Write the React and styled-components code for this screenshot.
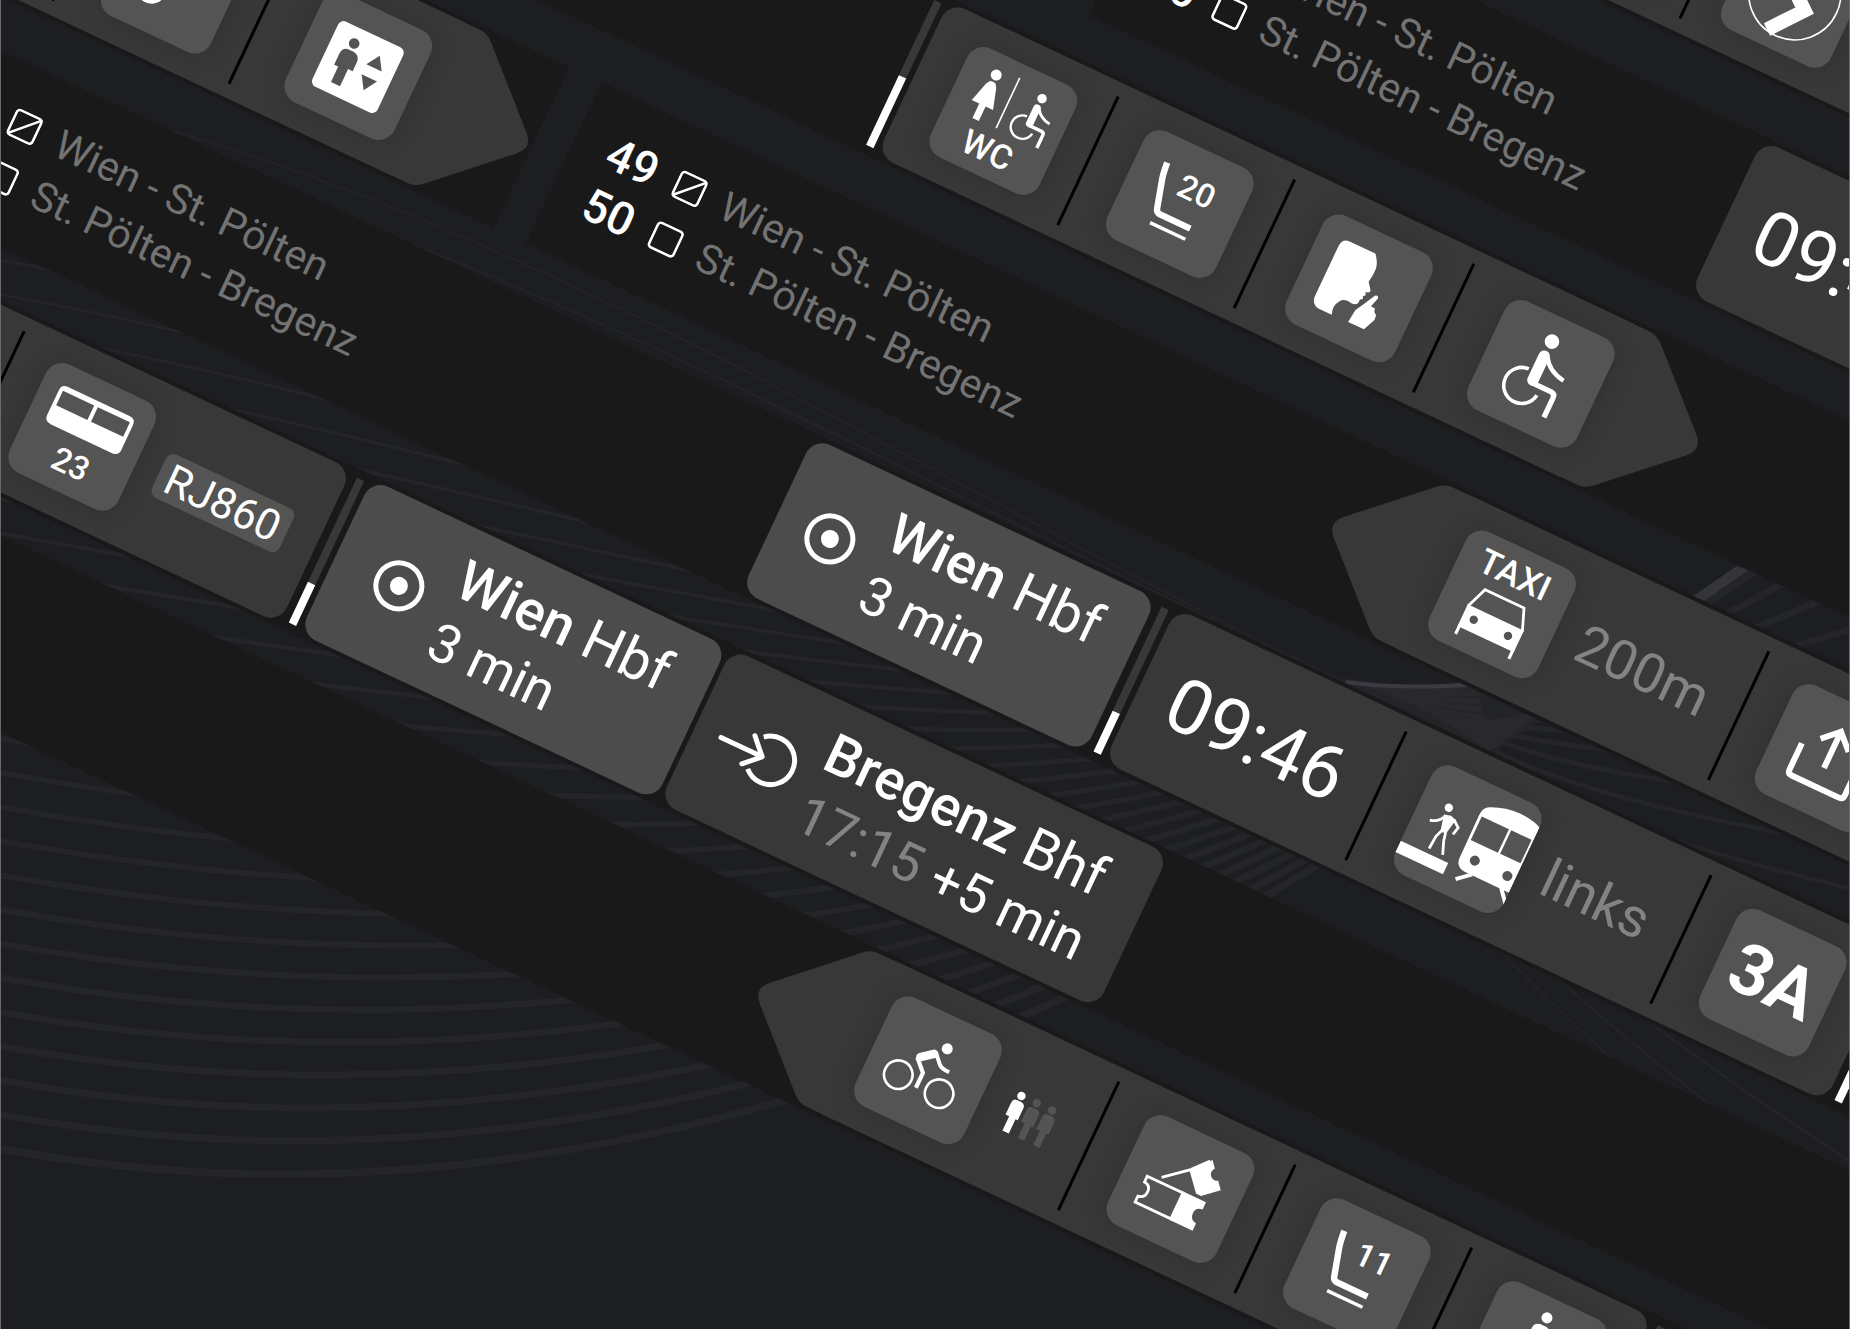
import React from 'react'
import styled, { createGlobalStyle } from 'styled-components'

const GlobalStyle = createGlobalStyle`
    * {
        box-sizing: border-box;
    }

    body {
        margin: 0;
        background: #1d1e22;
        color: #fff;
        font-family: Roboto, "Liberation Sans", sans-serif;
    }
`

const Page = styled.main`
    position: relative;
    height: 100vh;
    overflow: hidden;
    border-left: 1px solid #6a6a6a;
    border-right: 1px solid #6a6a6a;
`

const Backdrop = styled.svg`
    position: absolute;
    top: 0;
    left: 0;
    width: 1850px;
    height: 1330px;
    fill: none;
`

const Board = styled.div`
    position: relative;
    display: flex;
    flex-direction: column;
    width: 150vw;
    transform: translate(184px, -862px) rotate(25.2deg);
    transform-origin: 0 0;
`

const Track = styled.div`
    display: flex;
    gap: 36px;
    margin-top: ${({ $gap }) => $gap || 0}px;
    padding-left: ${({ $start }) => $start || 0}px;
`

const Train = styled.section`
    display: flex;
    flex: ${({ $fill }) => ($fill ? '1 0 auto' : 'none')};
    height: 178px;
    padding: 4px 4px 4px ${({ $lead }) => $lead || 4}px;
    background: #191919;
`

const Card = styled.div`
    position: relative;
    z-index: 1;
    display: flex;
    flex: none;
    align-items: center;
    height: 170px;
    margin-right: ${({ $apart }) => ($apart ? 5 : 0)}px;
    padding: 0 ${({ $end }) => $end || 0}px 0 ${({ $pad }) => $pad || 0}px;
    border-radius: ${({ $tip }) => (
        $tip === 'left' ? '0 18px 18px 0' : $tip === 'right' ? '18px 0 0 18px' : '18px'
    )};
    background: ${({ $current }) => ($current ? '#4c4c4c' : '#383838')};
`

const Tip = styled.span`
    flex: none;
    width: 112px;
    height: 170px;
    margin: ${({ $left }) => ($left ? '0 -2px 0 0' : '0 0 0 -2px')};
    background: #383838;
    clip-path: path('M0 0 H18 Q28 0 35 7 L105 73 Q118 85 105 97 L35 163 Q28 170 18 170 H0 Z');
    transform: ${({ $left }) => ($left ? 'scaleX(-1)' : 'none')};
`

const Cell = styled.div`
    display: flex;
    align-items: center;
    gap: 25px;
    height: 142px;
    padding: 0 ${({ $end }) => $end || 32}px 0 ${({ $pad }) => $pad || 40}px;
    border-right: ${({ $last }) => ($last ? 'none' : '3px solid #000')};
`

const Tile = styled.svg`
    flex: none;
    width: 120px;
    height: 120px;
    border-radius: 18px;
    background: #545454;
    box-shadow: 0 0 24px rgba(0, 0, 0, 0.16);
    fill: #fff;
    font-weight: 500;
    text-anchor: middle;
`

const Meter = styled.span`
    flex: none;
    display: flex;
    align-items: flex-end;
    width: 8px;
    height: 160px;
    margin: 5px 6px 5px 8px;
    background: #383838;
`

const MeterFill = styled.span`
    width: 8px;
    height: ${({ $level }) => $level}%;
    background: #fff;
`

const Time = styled.time`
    font-size: 76px;
    line-height: 84px;
`

const Note = styled.span`
    color: #838383;
    font-size: 55px;
    line-height: 64px;
`

const Chip = styled.span`
    padding: 0 9px;
    border-radius: 8px;
    background: #545454;
    font-size: 43px;
    line-height: 48px;
`

const StopText = styled.div`
    margin-left: ${({ $gap }) => $gap || 26}px;
    white-space: nowrap;
`

const StopName = styled.h2`
    margin: 0;
    font-size: 56px;
    font-weight: 400;
    line-height: 68px;

    b {
        font-weight: 500;
    }
`

const StopTime = styled.p`
    margin: 0;
    font-size: 54px;
    line-height: 68px;

    time {
        color: #838383;
    }
`

const Reservations = styled.ul`
    flex: none;
    width: ${({ $width }) => $width}px;
    margin: 0;
    padding: 27px 32px;
    list-style: none;
`

const Reservation = styled.li`
    display: flex;
    align-items: center;
    gap: 21px;
    height: 56px;
    color: #737373;
    font-size: 41px;
    line-height: 52px;
    white-space: nowrap;

    b {
        width: 53px;
        color: #fff;
        font-size: 46px;
        font-weight: 500;
    }
`

const LineIcon = styled.svg`
    flex: none;
    fill: none;
    stroke: #fff;
    stroke-linecap: round;
    stroke-linejoin: round;
`

const Wheelchair = () => (
    <g fill="none" stroke="#fff">
        <circle cx="56.3" cy="26" r="7.3" fill="#fff" stroke="none" />
        <path d="M55.5 42.5V69" strokeWidth="11.5" strokeLinecap="round" />
        <path d="M56 71.8H77Q81.5 72 81.3 77V98" strokeWidth="5.4" />
        <path d="M59 42Q66 54 83.5 56.5" strokeWidth="4.4" />
        <path d="M47 60.6A18 18 0 1 0 65.5 81" strokeWidth="3.6" />
    </g>
)

const Seat = ({ number }) => (
    <>
        <path d="M31 28Q32 40 34 47L41.500 74Q42.500 77.500 46 77.800H80" fill="none" stroke="#fff" strokeWidth="6.400" />
        <path d="M41 89.500H80" stroke="#fff" strokeWidth="3.500" />
        <text x="70" y="53" fontSize="33">{number}</text>
    </>
)

const icons = {
    cup: <path d="M28 34H58V78A15 15 0 0 1 28 78Z" />,
    lift: (
        <>
            <rect x="24" y="25" width="72" height="72" rx="6" />
            <g fill="#545454">
                <ellipse cx="46.600" cy="41.300" rx="5.300" ry="5.300" />
                <path d="M43 49H50Q57 50 57 57V67H52V86H42V69H37.500V57Q37.500 50 43 49Z" />
                <path d="M75 41.500L83.500 55H66.500ZM66.500 66H83.500L75 79.500Z" />
            </g>
        </>
    ),
    coach: (
        <>
            <path fillRule="evenodd" d="M26 21H94Q101 21 101 28V55Q101 62 94 62H26Q19 62 19 55V28Q19 21 26 21ZM23 26.500V42.500H57.500V26.500ZM61.500 26.500V42.500H97V26.500Z" />
            <text x="61" y="101" fontSize="33">23</text>
        </>
    ),
    toilet: (
        <>
            <circle cx="34" cy="21.500" r="5.500" />
            <path d="M31 29.500Q34 28 37 29.500L39.500 33L46 54.500H37.800V70.500H30.800V54.500H22.500L28.500 33Z" />
            <path d="M56.500 14V69.500" stroke="#fff" strokeWidth="1.600" />
            <g transform="translate(48.900 6.400) scale(.65)"><Wheelchair /></g>
            <text x="58" y="105" fontSize="34">WC</text>
        </>
    ),
    seat20: <Seat number="20" />,
    seat11: <Seat number="11" />,
    quiet: (
        <>
            <path d="M31 21.500H60Q66 28 67 35Q67.500 42 66 50L71.500 57Q72 60 67.500 60.500L69 63.500L67 65.500L68 68L65.500 70Q67 76 60 76.800Q51 75 48 80Q43 87 46.600 95.500H33Q24 95 23.500 86V30Q24 22 31 21.500Z" />
            <path d="M77.500 60Q80.500 57.500 81.500 61L78.500 71L83 71.500L84 75L87 77L87.500 82L82 95H64.500L66 81L71 72.500Z" />
        </>
    ),
    wheelchair: <Wheelchair />,
    taxi: (
        <>
            <text x="59" y="40" fontSize="35">TAXI</text>
            <path d="M30 76L38.500 54H81.500L90 76" fill="none" stroke="#fff" strokeWidth="2.800" />
            <path fillRule="evenodd" d="M29 74.500H91V98.500H29ZM45.200 86A4.200 4.200 0 1 0 36.800 86A4.200 4.200 0 1 0 45.200 86ZM83 86A4.200 4.200 0 1 0 74.600 86A4.200 4.200 0 1 0 83 86Z" />
            <path d="M30.600 96V106.500M89.400 96V106.500" stroke="#fff" strokeWidth="3.200" />
        </>
    ),
    exit: (
        <g fill="none" stroke="#fff" strokeWidth="6">
            <path d="M29.500 58V87Q29.500 91.500 34 91.500H86Q90.500 91.500 90.500 87V58" />
            <path d="M60 71V31M44.500 46L60 31L75.500 46" />
        </g>
    ),
    platform: (
        <>
            <circle cx="29.500" cy="39.700" r="4.200" />
            <path d="M28 48L35 46L41 48L38 64L32 65Z" />
            <g fill="none" stroke="#fff" strokeWidth="2.800">
                <path d="M30 48Q27 57 17.500 59M39 48L46.500 54L44.500 62" />
                <path d="M33 63L30 71L29 85M37 63L39 72L44 85" />
            </g>
            <path d="M0 90H52.500V102.500H0Z" />
            <path fillRule="evenodd" d="M60 33Q60 25 66 22Q80 15 97 14.500Q112 15 120 19V91H71Q60.500 90 60.500 80ZM63 33.500V59.500H93V33.500ZM95.500 33.500V59.500H118V33.500ZM80.500 76.500A5 5 0 1 0 70.500 76.500A5 5 0 1 0 80.500 76.500ZM116.500 76.500A5 5 0 1 0 106.500 76.500A5 5 0 1 0 116.500 76.500Z" />
            <path d="M79 90L66 101.500M111 90L122 103" stroke="#fff" strokeWidth="4" />
        </>
    ),
    sector: <text x="60" y="83" fontSize="71" fontWeight="700">3A</text>,
    bike: (
        <g fill="none" stroke="#fff">
            <circle cx="35" cy="76.700" r="14.300" strokeWidth="2.600" />
            <circle cx="80" cy="76.500" r="14.300" strokeWidth="2.600" />
            <circle cx="68.300" cy="32.400" r="5.500" fill="#fff" stroke="none" />
            <path d="M47.500 51.500L58.500 42.500" strokeWidth="8.500" strokeLinecap="round" />
            <path d="M45 53L56.500 64.500V81" strokeWidth="4.200" />
            <path d="M60 41L68.500 50Q72 53 80 52.800" strokeWidth="4" />
        </g>
    ),
    tickets: (
        <>
            <path d="M24.500 62.500H64V91H24.500V84.500Q31.500 83.500 31.500 76.500Q31.500 69.500 24.500 69Z" fill="none" stroke="#fff" strokeWidth="2.800" />
            <path d="M63.500 61H88.700V69Q81.500 70 81.500 76.500Q81.500 83.500 88.700 84.500V92.500H63.500Z" />
            <path d="M60 39L76.700 20L82.400 26.800Q79 32 82.500 35.500Q86 39 90.700 36.500L97 44L81.500 57.500H76Z" />
            <path d="M38 57.500L61 38L75 22" fill="none" stroke="#fff" strokeWidth="2.800" />
        </>
    ),
    person: (
        <>
            <circle cx="56.500" cy="20.500" r="5.500" />
            <path d="M53 29H60Q66 30 66 36V58H61V98H51V58H47V36Q47 30 53 29Z" />
        </>
    ),
    direction: (
        <g fill="none" stroke="#fff">
            <circle cx="60" cy="60" r="46" strokeWidth="1.600" />
            <path d="M40 42L76 71L50 104" strokeWidth="14" />
        </g>
    ),
}

const labels = {
    cup: 'Bordcafé',
    lift: 'Lift',
    coach: 'Wagen 23',
    toilet: 'WC',
    seat20: '20 Plätze',
    seat11: '11 Plätze',
    quiet: 'Ruhezone',
    wheelchair: 'Rollstuhlplatz',
    taxi: 'Taxi',
    exit: 'Ausgang',
    platform: 'Ausstieg',
    sector: 'Bahnsteig 3A',
    bike: 'Fahrräder',
    tickets: 'Tickets',
    person: 'Person',
    direction: 'Richtung',
}

const Pictogram = ({ name }) => (
    <Tile viewBox="0 0 120 120" role="img" aria-label={labels[name]}>{icons[name]}</Tile>
)

const HereIcon = () => (
    <LineIcon width="52" height="52" viewBox="0 0 52 52" strokeWidth="5">
        <circle cx="26" cy="26" r="23" />
        <circle cx="26" cy="26" r="9" fill="#fff" stroke="none" />
    </LineIcon>
)

const ArrivalIcon = () => (
    <LineIcon width="86" height="56" viewBox="0 0 86 56" strokeWidth="5">
        <path d="M4 28H49M34 12L49.500 28L34 43" />
        <path d="M42.500 9.500A24.200 24.200 0 1 1 41.500 45" strokeLinecap="butt" />
    </LineIcon>
)

const Occupancy = () => (
    <svg width="54" height="46" viewBox="-2 -2 54 46" role="img" aria-label="Geringe Auslastung">
        {['#fff', '#545454', '#545454'].map((color, index) => (
            <g key={index} fill={color} transform={`translate(${index * 17} 0)`}>
                <circle cx="8.500" cy="4.500" r="4.200" />
                <path d="M6 10H11Q15.500 10.500 15.500 15V28H13V44H6V28H2V15Q2 10.500 6 10Z" />
            </g>
        ))}
    </svg>
)

const SeatBox = ({ half }) => (
    <LineIcon width="30" height="30" viewBox="0 0 30 30" strokeWidth="2.6">
        <rect x="1.500" y="1.500" width="27" height="27" rx="3.500" />
        {half && <path d="M2.500 27.500L27.500 2.500" />}
    </LineIcon>
)

function Seats({ width }) {
    return (
        <Reservations $width={width}>
            <Reservation><b>49</b><SeatBox half />Wien - St. Pölten</Reservation>
            <Reservation><b>50</b><SeatBox />St. Pölten - Bregenz</Reservation>
        </Reservations>
    )
}

function Progress({ level }) {
    return (
        <Meter>
            <MeterFill $level={level} />
        </Meter>
    )
}

function CurrentStop({ pad, end, apart }) {
    return (
        <Card $current $pad={pad} $end={end} $apart={apart}>
            <HereIcon />
            <StopText>
                <StopName><b>Wien</b> Hbf</StopName>
                <StopTime>3 min</StopTime>
            </StopText>
        </Card>
    )
}

// blends the outer swirl line into the inner one
const mix = (from, to, t) => from.map((value, index) => value + (to[index] - value) * t)

const swirls = [
    { count: 32, from: [-300, 1060, 350, 1330, 1050, 1080, 1510, 735], to: [-300, 60, 300, 60, 800, 420, 1345, 683] },
    { count: 18, from: [1510, 735, 1580, 690, 1650, 640, 1950, 440], to: [1345, 683, 1360, 820, 1500, 1000, 1950, 1330] },
    { count: 9, from: [1345, 682, 1400, 692, 1440, 688, 1476, 684], to: [1345, 682, 1400, 715, 1450, 735, 1490, 752] },
]

function Swirl() {
    return (
        <Backdrop viewBox="0 0 1850 1330" aria-hidden="true">
            {swirls.map(({ count, from, to }) => Array.from({ length: count }, (_, index) => {
                const t = index / (count - 1)
                const [x, y, ...rest] = mix(from, to, t)
                return <path key={`${count}-${index}`} d={`M${x} ${y}C${rest.join(' ')}`} stroke="#242529" strokeWidth={7.5 - 6 * t} />
            }))}
            <path d="M1345 681Q1400 690 1470 683L1535 716L1488 752Q1420 700 1345 681Z" fill="#3a3b42" fillOpacity=".2" />
            <path d="M1345 682Q1400 690 1476 684" stroke="#3a3b42" strokeWidth="4" />
            <path d="M1692 596L1736 566L1748 570L1702 602Z" fill="#34353b" />
        </Backdrop>
    )
}

function App() {
    return (
        <Page>
            <GlobalStyle />
            <Swirl />
            <Board>
                <Track>
                    <Train $lead={1534} $fill>
                        <Card>
                            <Cell><Pictogram name="tickets" /></Cell>
                            <Cell $pad={32} $end={60} $last><Pictogram name="direction" /></Cell>
                        </Card>
                    </Train>
                </Track>

                <Track $gap={53} $start={1192}>
                    <Train $fill>
                        <Seats width={658} />
                        <Card>
                            <Cell $pad={34} $end={36}><Time>09:46</Time></Cell>
                            <Cell $last><Pictogram name="platform" /></Cell>
                        </Card>
                    </Train>
                </Track>

                <Track $gap={43}>
                    <Train $lead={1037} $fill>
                        <Progress level={48} />
                        <Card $tip="right">
                            <Cell><Pictogram name="toilet" /></Cell>
                            <Cell><Pictogram name="seat20" /></Cell>
                            <Cell $pad={43}><Pictogram name="quiet" /></Cell>
                            <Cell $pad={46} $end={3} $last><Pictogram name="wheelchair" /></Cell>
                        </Card>
                        <Tip />
                    </Train>
                </Track>

                <Track $gap={47}>
                    <Train $lead={54}>
                        <Card $tip="right">
                            <Cell><Pictogram name="tickets" /></Cell>
                            <Cell><Pictogram name="cup" /></Cell>
                            <Cell $pad={48} $end={17} $last><Pictogram name="lift" /></Cell>
                        </Card>
                        <Tip />
                    </Train>
                    <Train $fill>
                        <Seats width={846} />
                        <Tip $left />
                        <Card $tip="left">
                            <Cell $pad={17} $end={34}>
                                <Pictogram name="taxi" />
                                <Note>200m</Note>
                            </Cell>
                            <Cell $pad={38} $last><Pictogram name="exit" /></Cell>
                        </Card>
                    </Train>
                </Track>

                <Track $gap={49} $start={151}>
                    <Train $fill>
                        <Seats width={967} />
                        <CurrentStop pad={32} end={39} />
                        <Progress level={28} />
                        <Card>
                            <Cell $pad={34} $end={36}><Time>09:46</Time></Cell>
                            <Cell $end={36}>
                                <Pictogram name="platform" />
                                <Note>links</Note>
                            </Cell>
                            <Cell $end={38} $last><Pictogram name="sector" /></Cell>
                        </Card>
                        <Progress level={28} />
                        <Card $current $pad={44} $end={44} />
                    </Train>
                </Track>

                <Track $gap={48}>
                    <Train $lead={169} $fill>
                        <Card>
                            <Cell><Pictogram name="toilet" /></Cell>
                            <Cell $pad={36} $last>
                                <Pictogram name="coach" />
                                <Chip>RJ860</Chip>
                            </Cell>
                        </Card>
                        <Progress level={28} />
                        <CurrentStop pad={44} end={42} apart />
                        <Card $pad={24} $end={40}>
                            <ArrivalIcon />
                            <StopText $gap={20}>
                                <StopName><b>Bregenz</b> Bhf</StopName>
                                <StopTime><time>17:15</time> +5 min</StopTime>
                            </StopText>
                        </Card>
                    </Train>
                </Track>

                <Track $gap={35}>
                    <Train $lead={1308} $fill>
                        <Tip $left />
                        <Card $tip="left">
                            <Cell $pad={17} $end={37}>
                                <Pictogram name="bike" />
                                <Occupancy />
                            </Cell>
                            <Cell><Pictogram name="tickets" /></Cell>
                            <Cell><Pictogram name="seat11" /></Cell>
                            <Cell $last><Pictogram name="person" /></Cell>
                        </Card>
                        <Progress level={28} />
                    </Train>
                </Track>
            </Board>
        </Page>
    )
}

export default App
